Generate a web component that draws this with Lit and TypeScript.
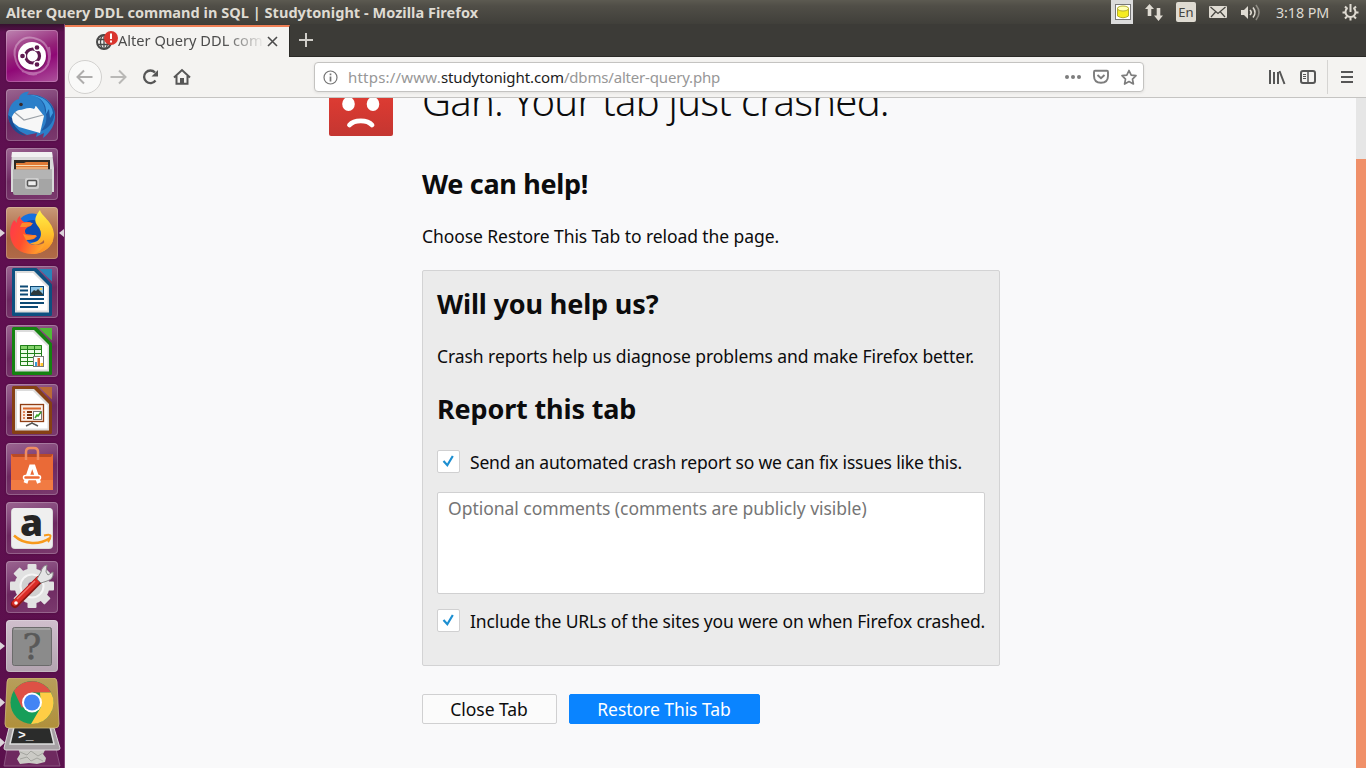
import { LitElement, html, css, svg } from "lit";
import { customElement } from "lit/decorators.js";
import { classMap } from "lit/directives/class-map.js";

type Tile = { name: string; tint: string; art: unknown; left?: boolean; right?: boolean };

const sheet = (dark: string, light: string) => svg`
  <path d="M7.500 3.500H30L44.500 19V48.500H7.500Z" fill=${dark} stroke=${dark} stroke-width="3" stroke-linejoin="round"/>
  <path d="M9 5H28L43 20V46.500H9Z" fill="#dcdcdc"/>
  <path d="M11 7H27L41.500 21.500V44.500H11Z" fill="#fff"/>
  <path d="M33 3H46V15.500Z" fill=${light}/>`;

const gearTeeth = [0, 45, 90, 135, 180, 225, 270, 315];

const tiles: Tile[] = [
  {
    name: "dash", tint: "dash",
    art: svg`
      <path d="M10 31C4 14 18 4 31 9M16 41C38 49 47 34 43 17M31 9C41 12 45 23 42 34M10 31C13 40 22 46 31 44" fill="none" stroke="#fff" stroke-opacity=".32" stroke-width="2"/>
      <circle cx="26.500" cy="27.500" r="14" fill="#500c42" opacity=".35"/>
      <circle cx="26" cy="26" r="14" fill="#fff"/>
      <circle cx="26.500" cy="26" r="7" fill="none" stroke="#5e1a4f" stroke-width="3.200"/>
      <g fill="#5e1a4f" stroke="#fff" stroke-width="1.300"><circle cx="16.500" cy="26" r="3"/><circle cx="31" cy="17.500" r="3"/><circle cx="31" cy="34.500" r="3"/></g>`,
  },
  {
    name: "thunderbird", tint: "plain",
    art: svg`
      <path d="M2 27C3 16 8 11 13 10C13 6 17 3 23 2.500L21 6C36 4 48 13 49 25C50 35 44 44 37 49L38 44L30 48L31 44L21 46L13 42C6 39 3 33 2 27Z" fill="#2b7fc9"/>
      <path d="M21 6C30 5 39 12 39 22C42 29 40 36 35 42C44 39 49 31 48.500 22C45 12 34 4 21 6Z" fill="#1d5aa4"/>
      <path d="M24 6C35 8 41 14 40 25L43 20L44 29L47 24C46 14 36 6 24 6Z" fill="#3f9be0"/>
      <path d="M7 21L30 17L38 27L34 44L13 38L5 32Z" fill="#f7f7f7"/>
      <path d="M7 22L18 31L37 26" fill="none" stroke="#9aa0a6" stroke-width="1.200"/>
      <path d="M4 25C7 12 17 8 25 12C29 14 31 17 28 20C22 17 18 21 13 21C9 22 7 25 5 30Z" fill="#2b7fc9"/>
      <circle cx="15" cy="15.500" r="1.800" fill="#3a2a28"/>
      <path d="M2 26C3 37 9 45 20 47C10 40 7 36 6 29Z" fill="#1a4c93"/>`,
  },
  {
    name: "files", tint: "plain",
    art: svg`
      <path d="M6 4H46L48 20V44H5V20Z" fill="#d9d9d9"/><path d="M6 4H46L46.500 9H5.500Z" fill="#f1f1f1"/>
      <path d="M8 12H44V24H8Z" fill="#2e2924"/>
      <path d="M10 15H18L20 14H42V24H10Z" fill="#e07a35"/>
      <path d="M10 17.500H42M10 20H42" stroke="#f7dcb4" stroke-width="1.200"/>
      <path d="M7 21.500H46V45Q46 47 44 47H9Q7 47 7 45Z" fill="#a5a5a5"/><path d="M7 21.500H46V31H7Z" fill="#b4b4b4"/>
      <rect x="19" y="30" width="14" height="11" rx="2" fill="#cfcfcf"/>
      <rect x="21.500" y="32.500" width="9" height="5.500" rx="1" fill="#eee" stroke="#555" stroke-width="1.500"/>`,
  },
  {
    name: "firefox", tint: "firefox", left: true, right: true,
    art: svg`
      <defs><linearGradient id="fur" x2="1" y2=".35"><stop stop-color="#ff3750"/><stop offset=".45" stop-color="#ff4f2e"/><stop offset="1" stop-color="#ffb52c"/></linearGradient>
      <linearGradient id="flame" x2="0" y2="1"><stop stop-color="#fff04a"/><stop offset=".5" stop-color="#ffc62c"/><stop offset="1" stop-color="#ff8a26"/></linearGradient></defs>
      <circle cx="26" cy="22" r="15.500" fill="#1670e0"/><circle cx="27" cy="24" r="11" fill="#0c4bb4"/>
      <path d="M14 9C11 11 11 14 11 16L8 13C2 22 3 35 11 42C22 51 41 48 47 34C45 31 42 34 38 36C30 40 22 38 20 32C24 33 28 33 30 30C32 29 30 28 27 28L20 27C18 24 19 22 22 20C26 19 27 17 24 15L18 15C15 13 14 11 14 9Z" fill="url(#fur)"/>
      <path d="M34 3C35 9 47 14 48 27C48 39 38 46 28 47C35 44 39 39 38 33C34 38 28 39 24 36C34 36 39 27 31 18C27 12 31 7 34 3Z" fill="url(#flame)"/>
      <path d="M20 20L25 18.500L27 16L22 15.500L16 16L14 20Z" fill="#ff8a2c"/><path d="M17 27Q23 30 30 28Q28 33 20 33Z" fill="#ff8b28"/>`,
  },
  {
    name: "writer", tint: "plain",
    art: svg`${sheet("#0d5080", "#2a84b8")}
      <path d="M14 20.500H22M14 24.500H22M14 28.500H22M14 33H38M14 37H38M14 41H32" stroke="#0d4a75" stroke-width="2"/>
      <rect x="24.500" y="20.500" width="13" height="9" fill="#8cc4e6" stroke="#0d4a75"/>
      <path d="M25 29V27L28 24L30 25L32 23L37 28V29Z" fill="#2d3a3b"/><circle cx="35" cy="23" r="1.300" fill="#ffd85a"/>`,
  },
  {
    name: "calc", tint: "plain",
    art: svg`${sheet("#158211", "#50ba38")}
      <rect x="14" y="20" width="22" height="21" fill="#effce9"/><path d="M14 20H36V24H14Z" fill="#85d46c"/>
      <path d="M14.500 20.500H35.500V40.500H14.500ZM21.500 20V41M28.500 20V41M14 24.500H36M14 28.500H36M14 32.500H36M14 36.500H36" fill="none" stroke="#217f1b"/>
      <rect x="27.500" y="31.500" width="10" height="10" fill="#fff" stroke="#777"/>
      <path d="M29 37H31V41H29Z" fill="#349bd9"/><path d="M31.500 33H34V41H31.500Z" fill="#d8632b"/><path d="M34.500 38H37V41H34.500Z" fill="#ffc629"/>`,
  },
  {
    name: "impress", tint: "plain",
    art: svg`${sheet("#864014", "#ba6b37")}
      <rect x="14.500" y="20.500" width="23" height="17" fill="#faede4" stroke="#903e13" stroke-width="1.300"/>
      <path d="M17 24.500H35" stroke="#d8662c" stroke-width="2"/><path d="M17 28H19M17 31H19M17 34H19" stroke="#d8662c" stroke-width="1.500"/>
      <path d="M21 28H26M21 31H26M21 34H26" stroke="#762e09" stroke-width="2"/>
      <rect x="27.500" y="27.500" width="8" height="8" fill="#fff" stroke="#777"/><path d="M29 34L31 31L32 32L35 28" fill="none" stroke="#36a226" stroke-width="1.500"/>
      <path d="M26 38V40M20 42L26 39L32 42" fill="none" stroke="#555" stroke-width="1.500"/>`,
  },
  {
    name: "software", tint: "plain",
    art: svg`
      <path d="M5 11H47V47H5Z" fill="#ea6a37"/><path d="M5 11H47L45 14H7Z" fill="#b94a26"/><path d="M5 37H47V47H5Z" fill="#f17b43"/>
      <path d="M20 17V9Q20 5 24 5H28Q32 5 32 9V17" fill="none" stroke="#ef8c62" stroke-width="2.500"/>
      <path d="M19.500 40L25 23.500H27.500L33 40" fill="none" stroke="#fff" stroke-width="4"/>
      <rect x="17.500" y="32.500" width="17" height="4" rx="2" fill="#ee6a35" stroke="#fff" stroke-width="1.500"/>`,
  },
  {
    name: "amazon", tint: "plain",
    art: svg`
      <rect x="5" y="6" width="42" height="41" rx="4" fill="#d9d9d9"/><rect x="6" y="6" width="40" height="40" rx="3" fill="#efefef"/>
      <text x="25.500" y="33.500" text-anchor="middle" font-family="Open Sans, sans-serif" font-weight="800" font-size="37" fill="#252525">a</text>
      <path d="M8 33.500C18 43 34 43 44 36" fill="none" stroke="#f79a1c" stroke-width="2.500"/><path d="M38 33.500Q45 32 44.500 34Q44.500 37 42 40" fill="none" stroke="#f79a1c" stroke-width="2"/>`,
  },
  {
    name: "settings", tint: "plain",
    art: svg`
      <g fill="#e2e2e2">${gearTeeth.map((a) => svg`<rect x="21.500" y="3" width="9" height="10" rx="1" transform="rotate(${a} 26 25)"/>`)}<circle cx="26" cy="25" r="17.500"/></g>
      <circle cx="26" cy="25" r="11.500" fill="#d0d0d0" stroke="#f5f5f5" stroke-width="2"/><circle cx="26" cy="25" r="4" fill="#792867"/>
      <path d="M9 43L33 19" stroke="#8a1512" stroke-width="8" stroke-linecap="round"/>
      <path d="M9 42L33 18" stroke="#d92b26" stroke-width="6" stroke-linecap="round"/>
      <path d="M11 38L29 20" stroke="#f4746c" stroke-width="1.500"/>
      <path d="M31 18L35 11Q36 5 41 4L40 11L42 14L47 11Q48 18 41 20L35 22Z" fill="#e5e5e5" stroke="#8b8b8b"/>
      <circle cx="10" cy="42" r="1.800" fill="#fff"/>`,
  },
  {
    name: "unknown", tint: "unknown", left: true,
    art: svg`
      <rect x="6.500" y="7.500" width="39" height="38" rx="2" fill="#8b8b8b" stroke="#6b6b6b"/>
      <path d="M8 9H44" stroke="#b8b8b8"/>
      <text x="26" y="38.500" text-anchor="middle" font-family="DejaVu Serif, serif" font-size="35" fill="#595959" stroke="#595959" stroke-width=".6">?</text>`,
  },
];

@customElement("unity-panel")
export class UnityPanel extends LitElement {
  static styles = css`
    :host { display: flex; align-items: center; height: 24px; padding: 0 7px 0 6px; box-sizing: border-box;
      background: linear-gradient(#5c5a51 0, #504e47 25%, #403f3a 100%); color: #dfdbd2; font-family: "Noto Sans", sans-serif; }
    .title { flex: 1; font-size: 14.5px; font-weight: 700; letter-spacing: .04px; line-height: 23px; white-space: nowrap; }
    .tray { display: flex; align-items: center; height: 24px; }
    .tray svg { display: block; }
    .db { background: #dcdcdc; margin-right: 12px; }
    .net { margin-right: 13px; }
    .lang { width: 20px; height: 20px; margin-right: 13px; border-radius: 2px; background: #dfdbd2; color: #45443f;
      font-size: 13px; line-height: 20px; text-align: center; }
    .mail { margin-right: 14px; }
    .vol { margin-right: 15px; }
    .time { width: 54px; margin-right: 12px; font-size: 14.300px; letter-spacing: -.08px; line-height: 23px; white-space: nowrap; }
  `;
  render() {
    return html`
      <div class="title">Alter Query DDL command in SQL | Studytonight - Mozilla Firefox</div>
      <div class="tray">
        <svg class="db" width="22" height="24"><rect x="4.500" y="4.500" width="15" height="15" fill="#fff" stroke="#777"/>
          <path d="M6.500 8V16Q12 19.500 17.500 16V8Z" fill="#f5ec20" stroke="#b5ad2b"/><ellipse cx="12" cy="8.500" rx="5.500" ry="2.500" fill="#ffffb5" stroke="#b5ad2b"/></svg>
        <svg class="net" width="18" height="24" fill="#dfdbd2"><path d="M0 9L4.500 4L9 9H6.300V16H2.700V9Z"/><path d="M9 15.500L13.500 21L18 15.500H15.300V8H11.700V15.500Z"/></svg>
        <div class="lang">En</div>
        <svg class="mail" width="18" height="24"><rect y="6" width="18" height="12" rx="1" fill="#dfdbd2"/><path d="M1.500 7L9 13.500L16.500 7M2 17L6.500 12M16 17L11.500 12" fill="none" stroke="#45443f" stroke-width="1.200"/></svg>
        <svg class="vol" width="20" height="24"><path d="M0 10H3L7 6V19L3 15H0Z" fill="#dfdbd2"/><g fill="none" stroke="#dfdbd2" stroke-width="1.600"><path d="M9 10Q11.500 12.500 9 15"/><path d="M12 7.500Q16 12.500 12 17.500"/><path d="M15 5Q21 12.500 15 20" opacity=".45"/></g></svg>
        <div class="time">3:18 PM</div>
        <svg width="17" height="24" viewBox="0 0 17 24"><g fill="none" stroke="#dfdbd2"><path d="M5.500 8A5 5 0 1 0 11.500 8" stroke-width="2"/><path d="M8.500 4V12" stroke-width="2"/>
          <path d="M3 6.500L5 8.500M14 6.500L12 8.500M.5 12.500H3.500M13.500 12.500H16.500M3 18.500L5 16.500M14 18.500L12 16.500M8.500 17.500V20.500" stroke-width="2"/></g></svg>
      </div>`;
  }
}

@customElement("unity-launcher")
export class UnityLauncher extends LitElement {
  static styles = css`
    :host { display: block; width: 65px; box-sizing: border-box; overflow: hidden; border-right: 1px solid #86477a;
      background: linear-gradient(#35102e 0, #5d1050 8px, #600f50 50%, #5a104c 100%); }
    .list { display: flex; flex-direction: column; gap: 7px; padding-top: 6px; }
    .slot { display: grid; grid-template-columns: 6px 52px 6px; align-items: center; height: 52px; }
    .tile { width: 52px; height: 52px; box-sizing: border-box; border-radius: 4px;
      box-shadow: inset 0 0 0 1px rgba(255,255,255,.22), 0 0 2px rgba(30,0,25,.4); }
    .plain { background: linear-gradient(165deg, #9b6590 0, #83467a 30%, #6d2860 52%, #7b3a6e 100%); }
    .dash { background: linear-gradient(160deg, #be85b1 0, #922077 45%, #8f0876 60%, #ae539d 100%); }
    .firefox { background: linear-gradient(#c99a79, #a8613e 60%, #b06a48); }
    .unknown { background: linear-gradient(#d0bfcd, #b3a4b0); }
    .tile svg { display: block; overflow: visible; }
    .mark { width: 0; height: 0; border: 4px solid transparent; }
    .left { border-left: 5px solid #dcd3da; border-right: 0; }
    .right { border-right: 5px solid #dcd3da; border-left: 0; justify-self: end; }
    .stack { display: block; margin-top: -1px; }
  `;
  render() {
    return html`<div class="list">
      ${tiles.map((t) => html`<div class="slot">
        <span class=${classMap({ mark: !!t.left, left: !!t.left })}></span>
        <div class="tile ${t.tint}"><svg width="52" height="52" viewBox="0 0 52 52">${t.art}</svg></div>
        <span class=${classMap({ mark: !!t.right, right: !!t.right })}></span>
      </div>`)}
      <svg class="stack" width="64" height="90" viewBox="0 0 64 90">
        <defs><linearGradient id="gold" x2="0" y2="1"><stop stop-color="#b79e5b"/><stop offset="1" stop-color="#b0903b"/></linearGradient></defs>
        <path d="M4 88L7 71H56L60 88Z" fill="#6e295f" stroke="#8a5480"/>
        <path d="M18 70H46L43 76L46 80L45 84L37 86L29 85L20 86L17 81L20 76Z" fill="#cbcac5"/>
        <path d="M20 74L27 77L31 73L38 78L43 75M20 81L27 79L31 83L37 80L43 83" fill="none" stroke="#a5a5a0"/>
        <path d="M9 50H54L60 70Q60 72 58 72H6Q4 72 4 70Z" fill="#a6a1a4" stroke="#ddd8db"/>
        <path d="M14 49H50L54 66H10Z" fill="#2b2c2b" stroke="#dedede" stroke-width="1.500"/>
        <text x="18" y="61" font-family="Liberation Mono, monospace" font-weight="700" font-size="13" fill="#f5f5f5">&gt;_</text>
        <path d="M11 0H53Q57 0 57 4L59 46Q59 50 55 50H9Q5 50 5 46L7 4Q7 0 11 0Z" fill="url(#gold)" stroke="#d0bd7e" stroke-width=".8"/>
        <circle cx="32" cy="24.500" r="21.500" fill="#179e59"/>
        <path d="M14 13A21.500 21.500 0 0 1 51 14.500H32L22 30Z" fill="#de5145"/>
        <path d="M51 14.500A21.500 21.500 0 0 1 31 46L41 29L40 14.500Z" fill="#ffcd45"/>
        <circle cx="32" cy="24.500" r="10" fill="#fff"/><circle cx="32" cy="24.500" r="8" fill="#4285f4"/>
        <path d="M0 20L5 24.500L0 29ZM0 60L5 64.500L0 69Z" fill="#dcd3da"/>
      </svg>
    </div>`;
  }
}

@customElement("browser-chrome")
export class BrowserChrome extends LitElement {
  static styles = css`
    :host { display: block; font-family: "Noto Sans", sans-serif; }
    svg { display: block; flex: none; }
    .tabs { display: flex; height: 33px; background: #3c3b37; box-sizing: border-box; border-bottom: 1px solid #2b2a27; }
    .tab { display: flex; align-items: center; width: 225px; box-sizing: border-box; border-top: 2px solid #ef7f55;
      margin-top: 1px; height: 32px; background: #f4f3f1; border-right: 1px solid #2b2a27; padding-left: 30px; }
    .label { width: 145px; margin-left: -1px; overflow: hidden; white-space: nowrap; font-size: 14.600px; line-height: 26px; padding-bottom: 5px; color: #4c4c4c;
      mask-image: linear-gradient(90deg, #000 105px, transparent 147px); }
    .close { margin: 0 0 2px 4px; }
    .plus { margin: 9px 0 0 9px; }
    .nav { display: flex; align-items: center; height: 41px; box-sizing: border-box; background: #f4f3f1; border-bottom: 1px solid #c5c4c2; padding-left: 3px; }
    .buttons { width: 246px; }
    .url { display: flex; align-items: center; width: 830px; height: 30px; box-sizing: border-box; border: 1px solid #c4c3c1; border-radius: 4px; background: #fff;
      box-shadow: 0 1px 3px rgba(0,0,0,.08); padding-left: 8px; font-size: 15px; color: #979797; white-space: nowrap; }
    .info { margin-right: 10px; }
    .address { flex: 1; letter-spacing: -.18px; }
    .scheme { letter-spacing: .2px; }
    .domain { color: #1c1c1c; letter-spacing: -.1px; }
    .page { margin-right: 6px; }
    .tools { margin-left: 122px; }
  `;
  render() {
    return html`
      <div class="tabs">
        <div class="tab">
          <svg width="24" height="22" viewBox="0 0 24 22">
            <g fill="none" stroke="#4a4a4a" stroke-width="1.300"><circle cx="9" cy="11" r="7" stroke-width="2"/><ellipse cx="9" cy="11" rx="3.500" ry="7"/><path d="M2 8.500H16M2 13.500H16M9 4V18"/></g>
            <circle cx="16" cy="7" r="7" fill="#d9352e"/><path d="M16 2.500V8M16 9.500V11.500" stroke="#fff" stroke-width="2"/>
          </svg>
          <div class="label">Alter Query DDL com</div>
          <svg class="close" width="11" height="11"><path d="M1 1L10 10M10 1L1 10" stroke="#4c4c4c" stroke-width="1.600" fill="none"/></svg>
        </div>
        <svg class="plus" width="14" height="14"><path d="M7 0V14M0 7H14" stroke="#d0cec9" stroke-width="2"/></svg>
      </div>
      <div class="nav">
        <svg class="buttons" width="246" height="36" viewBox="0 0 246 36" fill="none">
          <circle cx="17" cy="18" r="16.500" fill="#f9f9f8" stroke="#d2d1cf"/>
          <path d="M24.500 18H10M16 11.500L9.500 18L16 24.500" stroke="#aeadac" stroke-width="2"/>
          <path d="M42.500 18H57M51 11.500L57.500 18L51 24.500" stroke="#b9b8b6" stroke-width="2"/>
          <path d="M87.500 21.500A6.300 6.300 0 1 1 87 13.500" stroke="#565656" stroke-width="2.300"/><path d="M90 11V17.500H83.500Z" fill="#565656"/>
          <path d="M106 18.500L114 11L122 18.500M108.500 17V24.800H119.500V17" stroke="#565656" stroke-width="2"/><path d="M112 25V19H116V25Z" fill="#565656"/>
        </svg>
        <div class="url">
          <svg class="info" width="15" height="15" viewBox="0 0 15 15"><circle cx="7.500" cy="7.500" r="6.500" fill="none" stroke="#757575" stroke-width="1.200"/><path d="M7.500 3.500V5.300M7.500 6.500V11.500" stroke="#757575" stroke-width="1.700"/></svg>
          <div class="address"><span class="scheme">https://www.</span><span class="domain">studytonight.com</span>/dbms/alter-query.php</div>
          <svg class="page" width="72" height="20" viewBox="0 0 72 20" fill="none" stroke="#7d7d7d">
            <g fill="#7d7d7d" stroke="none"><circle cx="2" cy="10" r="2"/><circle cx="8" cy="10" r="2"/><circle cx="14" cy="10" r="2"/></g>
            <path d="M30 3.800H42Q43 3.800 43 5V9Q43 15.700 36 15.700Q29 15.700 29 9V5Q29 3.800 30 3.800Z" stroke-width="1.900"/><path d="M32.500 8L36 11.300L39.500 8" stroke-width="1.900"/>
            <path d="M64 3.500L66.200 8.100L71 8.700L67.500 12.100L68.400 17L64 14.600L59.600 17L60.500 12.100L57 8.700L61.800 8.100Z" stroke-width="1.700" stroke-linejoin="round"/>
          </svg>
        </div>
        <svg class="tools" width="92" height="34" viewBox="0 0 92 34" fill="none" stroke="#565656">
          <path d="M4 10V24M8 12V24M12 12V24M13.500 11L18.500 24" stroke-width="2"/>
          <rect x="35" y="11" width="14" height="12" rx="2" stroke-width="2"/><path d="M42 11V23" stroke-width="1.500"/><path d="M37 14.500H40M37 16.500H40M37 18.500H40"/>
          <path d="M61.500 0V34" stroke="#d5d4d2"/><path d="M75 12H87M75 17H87M75 22H87" stroke-width="2"/>
        </svg>
      </div>`;
  }
}

@customElement("crash-page")
export class CrashPage extends LitElement {
  static styles = css`
    :host { display: flex; overflow: hidden; background: #f9f9fa; color: #0c0c0d; font: 17.5px/24px "Noto Sans", sans-serif; }
    .view { flex: 1; overflow: hidden; }
    .content { display: flex; gap: 29px; margin: -26px 0 0 264px; }
    .face { display: block; flex: none; }
    .column { width: 578px; white-space: nowrap; }
    h1, h2, p { margin: 0; }
    h1 { font-weight: 300; font-size: 40px; line-height: 52px; letter-spacing: -.73px; padding-top: 3px; }
    h2 { font-weight: 700; font-size: 27px; line-height: 36px; letter-spacing: -.15px; }
    .help { margin-top: 39px; letter-spacing: -.3px; }
    .choose { margin-top: 22px; letter-spacing: -.08px; }
    .report { height: 396px; box-sizing: border-box; margin-top: 22px; padding: 15px 14px 0; border: 1px solid #d3d3d4; border-radius: 2px; background: #ebebeb; }
    .diag { margin-top: 22px; letter-spacing: -.07px; }
    .sub { margin-top: 23px; }
    .check { display: flex; align-items: center; gap: 10px; height: 24px; }
    .check span { padding-top: 2px; }
    .send { margin-top: 22px; letter-spacing: -.18px; }
    .urls { margin-top: 14px; letter-spacing: -.13px; }
    .box { display: block; width: 21px; height: 21px; flex: none; border: 1px solid #d0d0d1; border-radius: 2px; background: #fff; }
    .comments { height: 102px; box-sizing: border-box; margin-top: 19px; padding: 3px 10px; border: 1px solid #d0d0d1; border-radius: 2px; background: #fff; color: #757575; letter-spacing: -.02px; }
    .actions { display: flex; gap: 12px; margin-top: 28px; }
    button { height: 30px; margin: 0; padding: 0 1px 0 0; border: 1px solid #d0d0d1; border-radius: 2px; background: #fbfbfb; color: inherit; font: inherit; line-height: 28px; letter-spacing: -.05px; }
    .quit { width: 135px; }
    .restore { width: 191px; border-color: #0a84ff; background: #0a84ff; color: #fff; }
    .bar { width: 10px; background: #e6e6e6; padding-top: 61px; box-sizing: border-box; }
    .thumb { height: 100%; background: #f09069; }
  `;
  private tick(label: string, kind: string) {
    return html`<div class="check ${kind}"><svg class="box" viewBox="0 0 21 21"><path d="M5.500 10L9.300 14.200L14.800 5" fill="none" stroke="#1d8fd1" stroke-width="2.200"/></svg><span>${label}</span></div>`;
  }
  render() {
    return html`
      <div class="view"><div class="content">
        <svg class="face" width="64" height="64" viewBox="0 0 64 64">
          <defs><linearGradient id="red" x2="0" y2="1"><stop stop-color="#e8443a"/><stop offset=".5" stop-color="#d93a32"/><stop offset="1" stop-color="#c43631"/></linearGradient></defs>
          <rect width="64" height="64" rx="2" fill="url(#red)"/><g fill="#fff"><ellipse cx="19.500" cy="32" rx="6.300" ry="7"/><ellipse cx="44" cy="32" rx="6.300" ry="7"/></g>
          <path d="M20.500 53Q24 48.800 31.800 48.800Q39.500 48.800 43 53" fill="none" stroke="#fff" stroke-width="4.800" stroke-linecap="round"/>
        </svg>
        <div class="column">
          <h1>Gah. Your tab just crashed.</h1>
          <h2 class="help">We can help!</h2>
          <p class="choose">Choose Restore This Tab to reload the page.</p>
          <div class="report">
            <h2>Will you help us?</h2>
            <p class="diag">Crash reports help us diagnose problems and make Firefox better.</p>
            <h2 class="sub">Report this tab</h2>
            ${this.tick("Send an automated crash report so we can fix issues like this.", "send")}
            <div class="comments">Optional comments (comments are publicly visible)</div>
            ${this.tick("Include the URLs of the sites you were on when Firefox crashed.", "urls")}
          </div>
          <div class="actions"><button class="quit">Close Tab</button><button class="restore">Restore This Tab</button></div>
        </div>
      </div></div>
      <div class="bar"><div class="thumb"></div></div>`;
  }
}

@customElement("app-root")
export class AppRoot extends LitElement {
  static styles = css`
    :host { display: grid; grid-template: 24px 744px / 65px 1301px; width: 1366px; height: 768px; overflow: hidden; }
    unity-panel { grid-column: 1 / 3; }
    .window { display: grid; grid-template-rows: 74px 670px; }
  `;
  render() {
    return html`<unity-panel></unity-panel><unity-launcher></unity-launcher>
      <div class="window"><browser-chrome></browser-chrome><crash-page></crash-page></div>`;
  }
}
